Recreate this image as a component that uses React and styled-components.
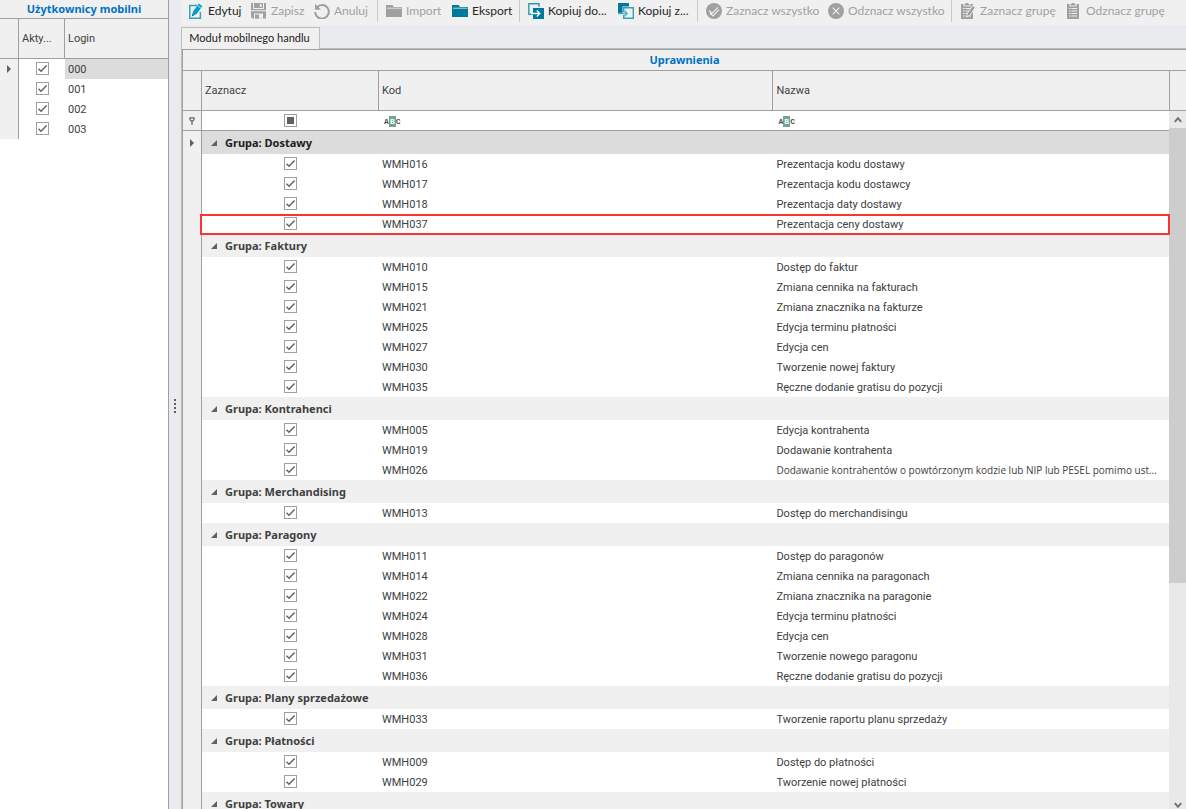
import React from 'react';
import styled, {createGlobalStyle} from 'styled-components';

const tick = `url("data:image/svg+xml,%3Csvg xmlns='http://www.w3.org/2000/svg' viewBox='0 0 11 11'%3E%3Cpath d='M1.5 5.8 4 8.3 9.6 2.4' fill='none' stroke='%23606060' stroke-width='1.4'/%3E%3C/svg%3E")`;

const GlobalStyle = createGlobalStyle`
  * {
    box-sizing: border-box;
  }
  body {
    margin: 0;
    background-color: #fff;
    color: #404040;
    font-family: Roboto, sans-serif;
    font-size: 11px;
  }
`;

const Shell = styled.div`
  display: flex;
  height: 100vh;
  overflow: hidden;
`;

const Users = styled.aside`
  flex: none;
  width: 169px;
  border-right: 1px solid #9f9f9f;
`;

const Title = styled.h2`
  flex: none;
  margin: 0;
  height: ${(props) => props.$height};
  line-height: ${(props) => props.$line};
  border-bottom: 1px solid #9f9f9f;
  background-color: #f0f0f0;
  color: #0072c6;
  font-family: "Noto Sans", sans-serif;
  font-size: 11px;
  font-weight: bold;
  text-align: center;
`;

const Splitter = styled.div`
  display: flex;
  flex-direction: column;
  align-items: center;
  justify-content: center;
  gap: 2px;
  flex: none;
  width: 12px;
  padding-top: 2px;
  background-color: #eaebef;
`;

const Dot = styled.span`
  width: 2px;
  height: 2px;
  background-color: #606060;
`;

const Main = styled.main`
  display: flex;
  flex-direction: column;
  flex: 1;
  min-width: 0;
  background-color: #eaebef;
`;

const Toolbar = styled.div`
  display: flex;
  align-items: center;
  flex: none;
  height: 25px;
  padding: 0 2px 3px;
  overflow: hidden;
  background-color: #f0f0f0;
`;

const ToolButton = styled.button`
  display: flex;
  align-items: center;
  gap: 4px;
  flex: none;
  width: ${(props) => props.$width};
  height: 22px;
  padding: 0 0 0 5px;
  border: 0;
  background: none;
  color: #262626;
  font-family: Lato, sans-serif;
  font-size: 12px;
  line-height: 16px;
  white-space: nowrap;
  &:disabled {
    color: #a0a0a0;
  }
  svg {
    flex: none;
  }
`;

const Separator = styled.span`
  flex: none;
  width: 1px;
  height: 22px;
  margin: 0 3px;
  background-color: #c8c8c8;
`;

const Tabs = styled.div`
  flex: none;
  height: 24px;
  padding-top: 2px;
  border-bottom: 1px solid #bcbec0;
`;

const Tab = styled.button`
  width: 139px;
  height: 22px;
  padding: 0 2px 2px 0;
  border: 1px solid #bcbec0;
  border-bottom: 0;
  background-color: #f0f0f0;
  color: #202020;
  font-family: Lato, sans-serif;
  font-size: 11px;
`;

const Page = styled.section`
  display: flex;
  flex-direction: column;
  flex: 1;
  min-height: 0;
  border-left: 1px solid #bcbec0;
`;

const Panel = styled.div`
  display: flex;
  flex-direction: column;
  flex: 1;
  min-height: 0;
  border: solid #9f9f9f;
  border-width: 1px 0 0 1px;
  background-color: #f0f0f0;
`;

const GridArea = styled.div`
  display: flex;
  flex: 1;
  min-height: 0;
`;

const Viewport = styled.div`
  flex: 1;
  min-width: 0;
  overflow: clip;
  overflow-clip-margin: 1px;
`;

const Table = styled.table`
  width: 100%;
  table-layout: fixed;
  border-collapse: separate;
  border-spacing: 0;
  background-color: #fff;
`;

const Col = styled.col`
  width: ${(props) => props.$width};
`;

const Head = styled.th`
  height: 40px;
  padding: 0 3px;
  border-right: ${(props) => (props.$last ? '0' : '1px solid #9f9f9f')};
  border-bottom: 1px solid #9f9f9f;
  background-color: #f0f0f0;
  font-weight: normal;
  text-align: left;
  white-space: nowrap;
  overflow: hidden;
  text-overflow: ellipsis;
`;

const Row = styled.tr`
  position: relative;
`;

const Cell = styled.td`
  height: 20px;
  padding: 1px 0 0 ${(props) => (props.$center ? '0' : '3px')};
  line-height: 19px;
  text-align: ${(props) => (props.$center ? 'center' : 'left')};
  white-space: nowrap;
  overflow: hidden;
  text-overflow: ellipsis;
  background-color: ${(props) => (props.$selected ? '#dcdcdc' : 'transparent')};
`;

const LongCell = styled(Cell)`
  font-family: "Open Sans", sans-serif;
  font-size: 10px;
`;

const FilterCell = styled(Cell)`
  line-height: 18px;
  border-bottom: 1px solid #9f9f9f;
`;

const Indicator = styled.td`
  height: 20px;
  padding: 0;
  border-right: 1px solid #9f9f9f;
  border-bottom: ${(props) => (props.$line ? '1px solid #9f9f9f' : '0')};
  background-color: #f0f0f0;
  text-align: center;
  svg {
    display: block;
    margin: 0 auto;
  }
`;

const GroupCell = styled.td`
  height: 23px;
  padding: 0 0 0 9px;
  background-color: ${(props) => (props.$selected ? '#dcdcdc' : '#f0f0f0')};
`;

const GroupButton = styled.button`
  display: flex;
  align-items: center;
  gap: 7px;
  padding: 0;
  border: 0;
  background: none;
  color: ${(props) => (props.$selected ? '#202020' : '#404040')};
  font-family: "Noto Sans", sans-serif;
  font-size: 11px;
  font-weight: bold;
  line-height: 20px;
`;

const Check = styled.input`
  appearance: none;
  display: block;
  width: 13px;
  height: 13px;
  margin: 0 auto 2px;
  border: 1px solid #9f9f9f;
  background: #fff;
  &:checked {
    background: #fff ${tick} center / 11px 11px no-repeat;
  }
`;

const FilterCheck = styled(Check)`
  padding: 2px;
  background: #606060 content-box;
`;

const Highlight = styled.span`
  position: absolute;
  top: 0;
  right: -1px;
  bottom: -1px;
  left: 17px;
  border: 2px solid #f83434;
  pointer-events: none;
`;

const Side = styled.div`
  display: flex;
  flex-direction: column;
  flex: none;
  width: 17px;
  background-color: #e9e9e9;
`;

const Corner = styled.div`
  flex: none;
  height: 40px;
  border-left: 1px solid #9f9f9f;
  border-bottom: 1px solid #9f9f9f;
  background-color: #f0f0f0;
`;

const ScrollButton = styled.button`
  display: flex;
  align-items: center;
  justify-content: center;
  flex: none;
  height: ${(props) => props.$height};
  padding: ${(props) => props.$pad || '0'} 0 0;
  border: 0;
  background: none;
`;

const Track = styled.div`
  flex: 1;
  min-height: 0;
`;

const Thumb = styled.div`
  height: 68%;
  background-color: #cdcdcd;
`;

const Icon = ({children}) => (
  <svg width="16" height="16" viewBox="0 0 16 16" fill="none" aria-hidden="true">
    {children}
  </svg>
);

const EditIcon = () => (
  <Icon>
    <path d="M9 2.5H1.8v12.7h10.6V9" stroke="#3aa0b8" strokeWidth="1.5" />
    <path d="M4.2 13l.8-4.6L10.8.4l3.6 2.8L8.6 11z" fill="#00a0c8" />
    <path d="M9.3 2.4l3.7 2.8" stroke="#f0f0f0" strokeWidth=".8" />
    <path d="M4 13.2l.5-2.4 1.6 1.4z" fill="#085f78" />
  </Icon>
);

const SaveIcon = () => (
  <Icon>
    <path d="M0 0h2v6h11V0h2v15.5H1.5L0 14z" fill="#a0a0a0" />
    <path d="M3 0h9v5H3z" fill="#a0a0a0" />
    <path d="M8.8 1h1.8v3H8.8zM0 7.2h15v1H0zM3 10.5h9v5H3z" fill="#f0f0f0" />
    <path d="M4 11.5h4v4H4z" fill="#a0a0a0" />
  </Icon>
);

const UndoIcon = () => (
  <Icon>
    <path d="M3 4.2A6.8 6.8 0 1 1 1.2 9" stroke="#a0a0a0" strokeWidth="2" />
    <path d="M1 .8v6h6z" fill="#a0a0a0" />
  </Icon>
);

const FolderIcon = ({color}) => (
  <Icon>
    <path d="M0 2h6.5l1.5 2h8v10H0z" fill={color} />
    <path d="M1 5.2h14.5" stroke="#f0f0f0" strokeWidth=".8" />
  </Icon>
);

const CopyToIcon = () => (
  <Icon>
    <path d="M11 4V.8H.8v10.4H5" stroke="#2b9bb5" strokeWidth="1.4" />
    <path d="M5 5h11v11H5z" fill="#007a9c" />
    <path d="M3 10.5h8.5M8.8 7.5l3 3-3 3" stroke="#f4fafc" strokeWidth="1.3" />
  </Icon>
);

const CopyFromIcon = () => (
  <Icon>
    <path d="M0 0h11v3.5H4.5V11H0z" fill="#007a9c" />
    <path d="M5.7 9V4.7h9.6v10.6H5.7V12" stroke="#3aa0b8" strokeWidth="1.4" />
    <path d="M0 10.5h8M6.5 7.8l2.7 2.7-2.7 2.7" stroke="#45b4cc" strokeWidth="1.3" />
  </Icon>
);

const AllIcon = () => (
  <Icon>
    <circle cx="8" cy="8" r="8" fill="#a0a0a0" />
    <path d="M3 7.5l3 3L12 4.3M4 10.3l3 2.7 6-6.3" stroke="#f0f0f0" strokeWidth="1.2" />
  </Icon>
);

const NoneIcon = () => (
  <Icon>
    <circle cx="8" cy="8" r="8" fill="#a0a0a0" />
    <path d="M4.7 4.7l6.6 6.6M11.3 4.7l-6.6 6.6" stroke="#f0f0f0" strokeWidth="1.2" />
  </Icon>
);

const ListIcon = ({pencil}) => (
  <Icon>
    <path d="M1 1h12v15H1z" fill="#a0a0a0" />
    <path d="M3.5 0h7v3.4h-7z" fill="#f0f0f0" />
    <path d="M4.5 1h1.2V0h2.6v1h1.2v1.6h-5z" fill="#a0a0a0" />
    <path d="M3 5.5h8M3 8h8M3 10.5h8M3 13h8" stroke="#f0f0f0" strokeWidth="1.1" />
    <path d="M5 5v9" stroke="#a0a0a0" strokeWidth=".8" />
    {pencil && (
      <path d="M6.5 14l1-4 5-7.5 2.8 2-5.3 7.8z" fill="#a0a0a0" stroke="#f0f0f0" strokeWidth=".9" />
    )}
  </Icon>
);

const Pointer = () => (
  <svg width="4" height="8" viewBox="0 0 4 8" aria-hidden="true">
    <path d="M0 0l4 4-4 4z" fill="#606060" />
  </svg>
);

const Pin = () => (
  <svg width="6" height="8" viewBox="0 0 6 8" fill="none" stroke="#606060" aria-hidden="true">
    <path d="M1 .8h4v2L3.6 4.2H2.4L1 2.8zM3 4v4" strokeWidth="1.2" />
  </svg>
);

const Expander = () => (
  <svg width="7" height="6" viewBox="0 0 7 6" aria-hidden="true">
    <path d="M6 0v6H0z" fill="#606060" />
  </svg>
);

const Chevron = ({down}) => (
  <svg width="8" height="7" viewBox="0 0 8 7" fill="none" stroke="#707070" strokeWidth="2" aria-hidden="true">
    <path d={down ? 'M.8 1.2L4 4.8l3.2-3.6' : 'M.8 5.8L4 2.2l3.2 3.6'} />
  </svg>
);

const AbcWrap = styled.span`
  display: flex;
  align-items: center;
  height: 18px;
  padding-left: 2px;
  color: #505050;
  font-family: "Liberation Mono", monospace;
  font-size: 8px;
  font-weight: bold;
  line-height: 11px;
`;

const AbcMiddle = styled.span`
  width: 7px;
  height: 11px;
  background-color: #6fa592;
  color: #fff;
  text-align: center;
`;

const Abc = () => (
  <AbcWrap>
    A<AbcMiddle>B</AbcMiddle>C
  </AbcWrap>
);

const tools = [
  [
    {name: 'Edytuj', width: '63px', icon: <EditIcon />, on: true},
    {name: 'Zapisz', width: '63px', icon: <SaveIcon />},
    {name: 'Anuluj', width: '65px', icon: <UndoIcon />}
  ],
  [
    {name: 'Import', width: '66px', icon: <FolderIcon color="#a0a0a0" />},
    {name: 'Eksport', width: '69px', icon: <FolderIcon color="#007a9c" />, on: true}
  ],
  [
    {name: 'Kopiuj do...', width: '90px', icon: <CopyToIcon />, on: true},
    {name: 'Kopiuj z...', width: '81px', icon: <CopyFromIcon />, on: true}
  ],
  [
    {name: 'Zaznacz wszystko', width: '122px', icon: <AllIcon />},
    {name: 'Odznacz wszystko', width: '125px', icon: <NoneIcon />}
  ],
  [
    {name: 'Zaznacz grupę', width: '106px', icon: <ListIcon pencil />},
    {name: 'Odznacz grupę', width: '110px', icon: <ListIcon />}
  ]
];

const users = ['000', '001', '002', '003'];

const groups = [
  {
    name: 'Dostawy',
    items: [
      ['WMH016', 'Prezentacja kodu dostawy'],
      ['WMH017', 'Prezentacja kodu dostawcy'],
      ['WMH018', 'Prezentacja daty dostawy'],
      ['WMH037', 'Prezentacja ceny dostawy']
    ]
  },
  {
    name: 'Faktury',
    items: [
      ['WMH010', 'Dostęp do faktur'],
      ['WMH015', 'Zmiana cennika na fakturach'],
      ['WMH021', 'Zmiana znacznika na fakturze'],
      ['WMH025', 'Edycja terminu płatności'],
      ['WMH027', 'Edycja cen'],
      ['WMH030', 'Tworzenie nowej faktury'],
      ['WMH035', 'Ręczne dodanie gratisu do pozycji']
    ]
  },
  {
    name: 'Kontrahenci',
    items: [
      ['WMH005', 'Edycja kontrahenta'],
      ['WMH019', 'Dodawanie kontrahenta'],
      ['WMH026', 'Dodawanie kontrahentów o powtórzonym kodzie lub NIP lub PESEL pomimo ust...']
    ]
  },
  {
    name: 'Merchandising',
    items: [['WMH013', 'Dostęp do merchandisingu']]
  },
  {
    name: 'Paragony',
    items: [
      ['WMH011', 'Dostęp do paragonów'],
      ['WMH014', 'Zmiana cennika na paragonach'],
      ['WMH022', 'Zmiana znacznika na paragonie'],
      ['WMH024', 'Edycja terminu płatności'],
      ['WMH028', 'Edycja cen'],
      ['WMH031', 'Tworzenie nowego paragonu'],
      ['WMH036', 'Ręczne dodanie gratisu do pozycji']
    ]
  },
  {
    name: 'Plany sprzedażowe',
    items: [['WMH033', 'Tworzenie raportu planu sprzedaży']]
  },
  {
    name: 'Płatności',
    items: [
      ['WMH009', 'Dostęp do płatności'],
      ['WMH029', 'Tworzenie nowej płatności']
    ]
  },
  {name: 'Towary', items: []}
];

const UserList = () => (
  <Users>
    <Title $height="19px" $line="18px">Użytkownicy mobilni</Title>
    <Table>
      <colgroup>
        <Col $width="19px" />
        <Col $width="46px" />
        <Col />
      </colgroup>
      <thead>
        <tr>
          <Head />
          <Head>Akty...</Head>
          <Head $last>Login</Head>
        </tr>
      </thead>
      <tbody>
        {users.map((user, i) => (
          <tr key={user}>
            <Indicator>{i === 0 && <Pointer />}</Indicator>
            <Cell $center>
              <Check type="checkbox" defaultChecked aria-label={`Aktywny ${user}`} />
            </Cell>
            <Cell $selected={i === 0}>{user}</Cell>
          </tr>
        ))}
      </tbody>
    </Table>
  </Users>
);

const Group = ({group, selected}) => (
  <tbody>
    <tr>
      <Indicator>{selected && <Pointer />}</Indicator>
      <GroupCell colSpan="3" $selected={selected}>
        <GroupButton $selected={selected}>
          <Expander />
          {`Grupa: ${group.name}`}
        </GroupButton>
      </GroupCell>
    </tr>
    {group.items.map(([code, label]) => (
      <Row key={code}>
        <Indicator>{code === 'WMH037' && <Highlight />}</Indicator>
        <Cell $center>
          <Check type="checkbox" defaultChecked aria-label={code} />
        </Cell>
        <Cell>{code}</Cell>
        {label.length > 60 ? <LongCell>{label}</LongCell> : <Cell>{label}</Cell>}
      </Row>
    ))}
  </tbody>
);

const Permissions = () => (
  <Panel>
    <Title $height="21px" $line="20px">Uprawnienia</Title>
    <GridArea>
      <Viewport>
        <Table>
          <colgroup>
            <Col $width="19px" />
            <Col $width="177px" />
            <Col $width="40%" />
            <Col />
          </colgroup>
          <thead>
            <tr>
              <Head />
              <Head>Zaznacz</Head>
              <Head>Kod</Head>
              <Head $last>Nazwa</Head>
            </tr>
            <tr>
              <Indicator $line><Pin /></Indicator>
              <FilterCell $center>
                <FilterCheck type="checkbox" aria-label="Filtr zaznaczenia" />
              </FilterCell>
              <FilterCell><Abc /></FilterCell>
              <FilterCell><Abc /></FilterCell>
            </tr>
          </thead>
          {groups.map((group, i) => (
            <Group key={group.name} group={group} selected={i === 0} />
          ))}
        </Table>
      </Viewport>
      <Side>
        <Corner />
        <ScrollButton $height="17px" aria-label="W górę"><Chevron /></ScrollButton>
        <Track>
          <Thumb />
        </Track>
        <ScrollButton $height="12px" $pad="4px" aria-label="W dół"><Chevron down /></ScrollButton>
      </Side>
    </GridArea>
  </Panel>
);

const App = () => (
  <Shell>
    <GlobalStyle />
    <UserList />
    <Splitter>
      <Dot />
      <Dot />
      <Dot />
      <Dot />
    </Splitter>
    <Main>
      <Toolbar>
        {tools.map((section, i) => (
          <React.Fragment key={section[0].name}>
            {i > 0 && <Separator />}
            {section.map((tool) => (
              <ToolButton key={tool.name} $width={tool.width} disabled={!tool.on}>
                {tool.icon}
                <span>{tool.name}</span>
              </ToolButton>
            ))}
          </React.Fragment>
        ))}
      </Toolbar>
      <Tabs>
        <Tab>Moduł mobilnego handlu</Tab>
      </Tabs>
      <Page>
        <Permissions />
      </Page>
    </Main>
  </Shell>
);

export default App;
